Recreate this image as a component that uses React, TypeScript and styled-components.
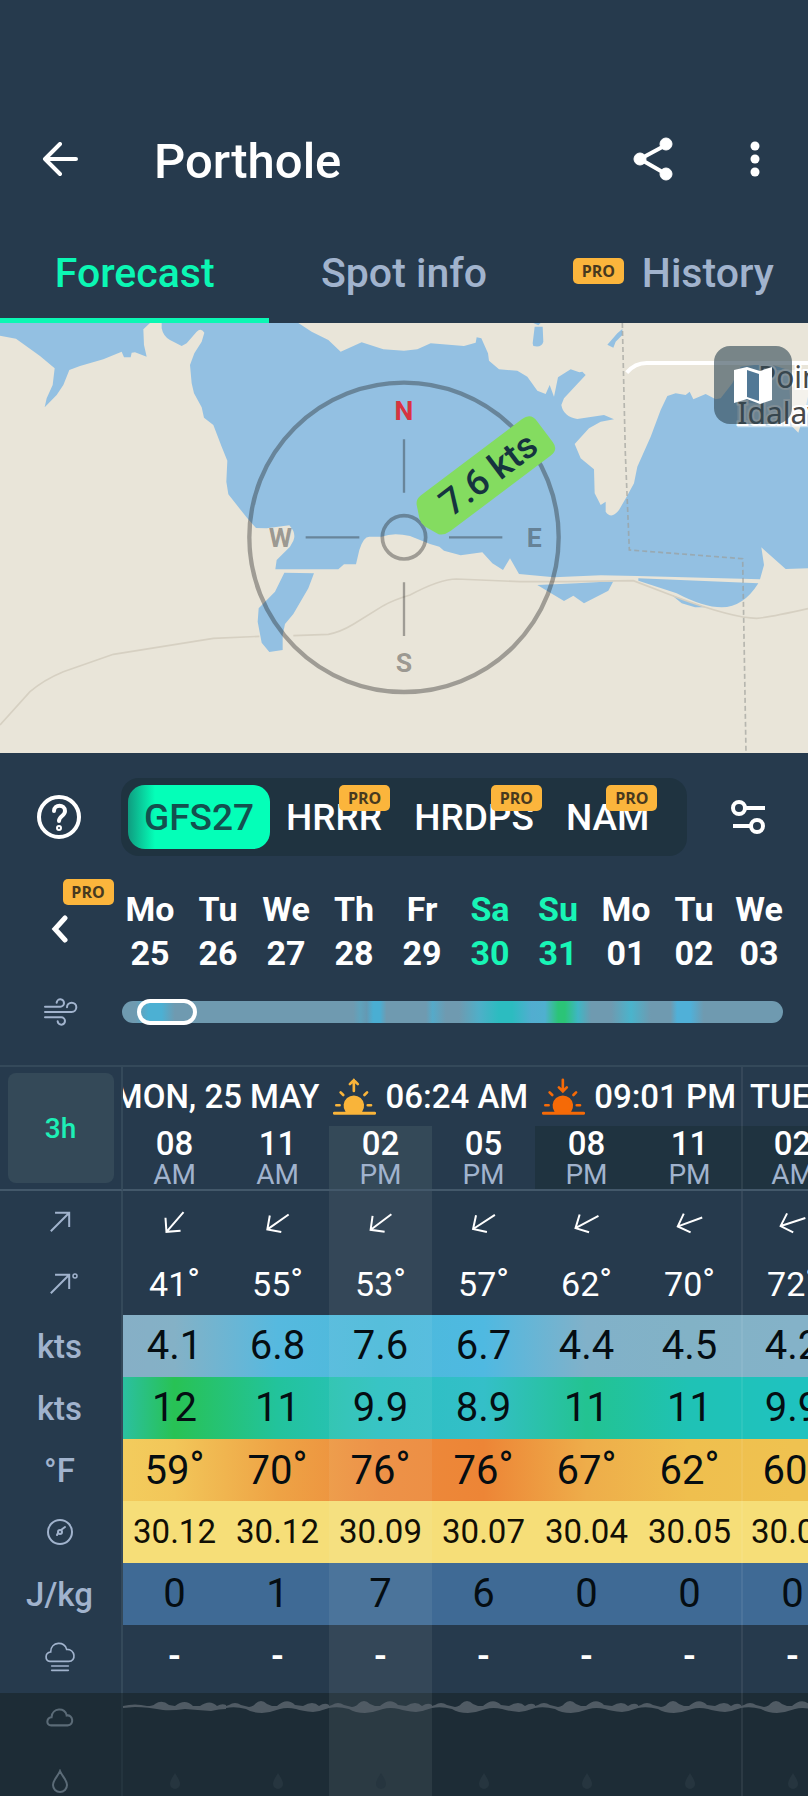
import React, { useState } from "react";
import styled, { createGlobalStyle, css } from "styled-components";

const color = {
  page: "#263a4d",
  accent: "#0bf7b4",
  muted: "#a1b3cd",
  badge: "#fbb53c",
  night: "#1f3340",
  line: "#34495a",
  dark: "#1d2c36",
};

const GlobalStyle = createGlobalStyle`
  *, *::before, *::after { box-sizing: border-box; }
  body { margin: 0; background: ${color.page}; overflow-x: hidden; }
  button, input { font: inherit; color: inherit; }
  button { background: none; border: 0; padding: 0; cursor: pointer; }
  svg { display: block; }
`;

const Page = styled.div`
  font-family: Roboto, "Liberation Sans", sans-serif;
  color: #fff;
  padding-top: 97px;
  overflow: hidden;
`;

/* ---------- header ---------- */

const AppBar = styled.header`
  display: flex;
  align-items: center;
  height: 128px;
  padding: 0 29px 2px 36px;
`;

const IconButton = styled.button`
  display: flex;
  align-items: center;
  justify-content: center;
  width: 48px;
  height: 48px;
`;

const Title = styled.h1`
  flex: 1;
  margin: 0 0 0 70px;
  padding-top: 4px;
  font-size: 49px;
  line-height: 56px;
  font-weight: 500;
`;

const Actions = styled.div`
  display: flex;
  gap: 54px;
`;

const Tabs = styled.nav`
  display: grid;
  grid-template-columns: repeat(3, 1fr);
`;

const Tab = styled.a<{ $active?: boolean }>`
  display: flex;
  align-items: center;
  justify-content: center;
  gap: 18px;
  height: 98px;
  padding-top: 2px;
  border-bottom: 5px solid ${(p) => (p.$active ? color.accent : "transparent")};
  color: ${(p) => (p.$active ? color.accent : color.muted)};
  font-size: 41px;
  font-weight: 500;
  text-decoration: none;
  white-space: nowrap;
`;

const ProBadge = styled.span`
  display: block;
  width: 51px;
  border-radius: 5px;
  background: ${color.badge};
  color: #47391f;
  font: 700 16px/26px "Open Sans", "Noto Sans", sans-serif;
  text-align: center;
`;

const TabBadge = styled(ProBadge)`
  margin-bottom: 4px;
`;

/* ---------- map ---------- */

const MapPane = styled.section`
  position: relative;
  height: 430px;
  background: #e9e5d9;
`;

const MapDrawing = styled.svg`
  width: 100%;
  height: 430px;
`;

const MapButton = styled.button`
  position: absolute;
  top: 23px;
  right: 16px;
  display: flex;
  align-items: center;
  justify-content: center;
  width: 78px;
  height: 78px;
  border-radius: 16px;
  background: rgba(45, 68, 82, 0.6);
`;

/* ---------- model picker ---------- */

const ModelRow = styled.section`
  display: flex;
  align-items: center;
  padding-top: 25px;
`;

const SideSlot = styled.div`
  display: flex;
  flex-direction: column;
  align-items: center;
  flex: none;
  width: 118px;
`;

const FilterSlot = styled(SideSlot)`
  width: 121px;
`;

const ModelPicker = styled.div`
  flex: 1;
  display: flex;
  margin-left: 3px;
  padding: 7px;
  border-radius: 18px;
  background: ${color.night};
`;

const ModelButton = styled.button<{ $active?: boolean }>`
  position: relative;
  height: 64px;
  padding: 0 16px;
  border-radius: 17px;
  font-size: 37px;
  font-weight: 500;
  ${(p) =>
    p.$active &&
    css`
      background: linear-gradient(90deg, #0f9c80 0, #04ffb8 27px);
      color: #14504f;
    `}
`;

const ModelBadge = styled(ProBadge)`
  position: absolute;
  top: 0;
  right: 8px;
`;

/* ---------- day strip ---------- */

const DayRow = styled.section`
  display: flex;
  padding-top: 23px;
`;

const PrevSlot = styled(SideSlot)`
  width: 116px;
  padding-left: 4px;
`;

const PrevBadge = styled(ProBadge)`
  margin-left: 56px;
`;

const Days = styled.div`
  flex: 1;
  display: grid;
  grid-template-columns: repeat(9, 68fr) 62fr;
  padding: 8px 18px 0 0;
`;

const Day = styled.button<{ $weekend?: boolean }>`
  display: flex;
  flex-direction: column;
  align-items: center;
  color: ${(p) => (p.$weekend ? "#18f5b6" : "#fff")};
  font-size: 34px;
  line-height: 44px;
  font-weight: 700;
`;

const RangeRow = styled.section`
  display: flex;
  align-items: center;
  height: 73px;
  margin-bottom: 17px;
`;

const WindSlot = styled(SideSlot)`
  padding-left: 4px;
`;

const RangeBox = styled.div`
  flex: 1;
  display: flex;
  padding: 0 25px 0 4px;
`;

const WindRange = styled.input`
  appearance: none;
  width: 100%;
  height: 28px;
  margin: 0;
  background: none;

  &::-webkit-slider-runnable-track {
    height: 22px;
    border-radius: 11px;
    background: linear-gradient(
      90deg,
      #6f9ab0 0 2%, #4cb0d3 4% 6%, #6f9ab0 8% 35%, #5fa3bd 36%, #6499b3 37%,
      #4aaed3 38% 39%, #6f9ab0 40% 45%, #6f9ab0 46%, #55aac9 47%, #6f9ab0 49% 51%,
      #4fafc8 54%, #2cbcc0 57% 59%, #52add0 62%, #4fb0cf 64%, #2bc477 66% 67%,
      #3fb6c4 69%, #6f9ab0 71% 74%, #4ab4cc 77%, #6f9ab0 80% 83%, #50b0d8 84% 86%,
      #6f9ab0 88%
    );
  }

  &::-webkit-slider-thumb {
    appearance: none;
    width: 60px;
    height: 26px;
    margin-top: -2px;
    border: 4px solid #fff;
    border-radius: 13px;
    background: transparent;
  }
`;

/* ---------- forecast table ---------- */

const Scroller = styled.section`
  overflow: hidden;
  border-top: 2px solid ${color.line};
`;

const Table = styled.table`
  table-layout: fixed;
  width: calc(100% + 36px);
  border-spacing: 0;
  text-align: center;

  th,
  td {
    padding: 0;
  }

  col:first-child {
    width: 123px;
  }
`;

const divider = css`
  box-shadow: inset 2px 0 rgba(255, 255, 255, 0.07);
`;

const StepCell = styled.th`
  border-right: 2px solid ${color.line};
  border-bottom: 2px solid #43586a;
`;

const StepButton = styled.button`
  width: 106px;
  height: 110px;
  border-radius: 8px;
  background: #344958;
  color: #1defb6;
  font-size: 28px;
  font-weight: 500;
`;

const DateCell = styled.th<{ $next?: boolean }>`
  height: 59px;
  font-size: 33px;
  font-weight: 500;
  white-space: nowrap;
  ${(p) => p.$next && divider}
`;

const DateLine = styled.div<{ $next?: boolean }>`
  display: flex;
  align-items: center;
  justify-content: ${(p) => (p.$next ? "flex-start" : "flex-end")};
  gap: 9px;
  padding: 0 5px 0 9px;
  overflow: hidden;
`;

const SunTime = styled.span`
  display: flex;
  align-items: center;
  gap: 9px;
  margin-left: 5px;
`;

const HourCell = styled.th<{ $now?: boolean; $night?: boolean; $next?: boolean }>`
  height: 65px;
  border-bottom: 2px solid #43586a;
  vertical-align: top;
  background: ${(p) => (p.$now ? "#344958" : p.$night ? color.night : "none")};
  ${(p) => p.$next && divider}
`;

const Hour = styled.div`
  font-size: 33px;
  line-height: 36px;
  font-weight: 500;
`;

const Meridiem = styled.div`
  color: ${color.muted};
  font-size: 28px;
  line-height: 26px;
  font-weight: 400;
`;

const Row = styled.tr<{ $fill?: string; $height?: number; $dim?: boolean }>`
  height: ${(p) => p.$height ?? 62}px;
  background: ${(p) => (p.$dim ? color.dark : p.$fill ?? "none")};
`;

const LabelCell = styled.th<{ $dim?: boolean }>`
  background: ${(p) => (p.$dim ? color.dark : color.page)};
  border-right: 2px solid ${(p) => (p.$dim ? "#24343e" : color.line)};
  color: ${(p) => (p.$dim ? "#5b6b77" : color.muted)};
  font-size: 33px;
  font-weight: 500;

  svg {
    margin: 0 auto;
  }
`;

const LabelBox = styled.div`
  padding-right: 2px;
`;

type CellKind = "degree" | "value" | "pressure" | "dash" | "art";

const cellFont: Record<CellKind, string> = {
  degree: "font-size: 34px; color: #fff;",
  value: "font-size: 40px; color: #050d12;",
  pressure: "font-size: 33px; color: #110f05;",
  dash: "font-size: 34px; font-weight: 700; color: #fff;",
  art: "vertical-align: top;",
};

const Cell = styled.td<{ $kind: CellKind; $now?: boolean; $next?: boolean }>`
  ${(p) => cellFont[p.$kind]}
  line-height: 44px;
  background: ${(p) => (p.$now ? "rgba(238, 255, 234, 0.07)" : "none")};
  white-space: nowrap;
  ${(p) => p.$next && divider}

  svg {
    margin: 0 auto;
  }
`;

const Degree = styled.span`
  line-height: 1;
  vertical-align: 4px;
`;

const Dash = styled.div`
  padding-bottom: 8px;
`;

const WaveSvg = styled.svg`
  width: 100%;
  height: 56px;
`;

/* ---------- drawings ---------- */

const WindMap = () => (
  <MapDrawing viewBox="0 9 2424 1290" preserveAspectRatio="xMidYMid slice" role="img" aria-label="Spot map">
    <g fill="#93c0e2">
      <path d="M0 9H450L430 28 432 75 440 110 405 97 395 98 392 112H372L365 95 310 118 240 138 208 150 190 195 170 225 134 262 140 235 158 195 164 145 120 108 48 56 0 47Z" />
      <path d="M485 9V25Q490 50 510 60L545 78 560 70 590 35Q603 22 613 38L605 65 583 100 570 135 575 190 582 220 605 262 612 293 640 315 665 380 682 422 679 485 685 523 742 595 768 624 800 625 868 616Q890 640 880 662L870 680 830 720 826 748H1015L1032 733H1068L1078 690Q1090 650 1108 650H1145Q1180 636 1230 648L1290 672 1318 680 1332 692 1382 706 1447 697 1477 730 1509 750 1530 715 1557 762 1662 772 1802 766 1912 768 2280 778 2292 735 2284 682 2357 747 2424 745V230L2410 290 2395 338 2375 318 2365 150 2300 130 2222 140 2197 190 2162 235 2147 238 2117 222 2080 238 2069 215 2057 225 2027 220 2002 228 1982 270 1952 350 1912 440 1902 490 1880 530 1857 570Q1834 600 1817 575V545L1802 555 1784 520 1782 448 1742 415 1724 372 1767 325 1802 305 1842 298 1812 285 1732 297Q1690 290 1684 255L1692 235 1757 165 1747 155 1738 157 1712 148 1674 172 1662 230 1649 195 1637 222 1612 212 1582 170 1552 152 1497 148 1467 122 1464 100 1444 55 1430 52 1427 68 1392 78 1292 70 1252 88 1212 92 1150 88 1085 67 1022 95 985 60 935 35 895 9Z" />
      <path d="M853 758 942 760 925 805 880 882 855 912 848 945V990L808 996 785 968 773 905 776 865 825 815Z" />
      <path d="M1612 795 1730 790 1840 784 1825 812 1752 850 1720 827 1692 843Z" />
      <path d="M1915 775 2275 790Q2230 862 2165 862 2110 862 2030 820L1915 782Z" />
      <path d="M2015 825 2060 842 2118 862H2085L2045 850Z" />
      <path d="M1600 9H1622L1615 16ZM1604 20H1628L1630 65Q1625 84 1600 78L1598 70Z" />
      <path d="M1822 74 1852 40 1867 27V45L1847 65 1840 83Z" />
    </g>
    <g fill="none" stroke="#d6d0c2" strokeWidth="5">
      <path d="M0 1215 90 1115Q130 1080 190 1055L340 1003 640 955 778 949" />
      <path d="M880 947 985 943Q1020 937 1060 913L1150 857Q1180 840 1230 825 1320 777 1370 777L1560 785 1700 785 1900 782 2030 832Q2200 895 2270 895 2310 892 2424 866" />
    </g>
    <path d="M1867 9 1876 400 1888 690 2228 716 2238 1299" fill="none" stroke="#9b9d98" strokeOpacity=".65" strokeWidth="5" strokeDasharray="15 9" />
    <path d="M1880 158Q1905 129 1940 129H2424" fill="none" stroke="#fff" strokeWidth="12" />
    <path d="M2280 150H2424V270H2280ZM2212 250H2424V322H2212Z" fill="#fff" fillOpacity=".5" />
    <g fontFamily="Noto Sans, sans-serif" fontSize="90" fill="#47494a" stroke="#fff" strokeWidth="12" paintOrder="stroke">
      <text x="2274" y="204">Poin</text>
      <text x="2212" y="312">Idalav</text>
    </g>
    <g fill="none" stroke="#1c1c1c" strokeOpacity=".36">
      <circle cx="1212" cy="652" r="464" strokeWidth="13" />
      <circle cx="1212" cy="652" r="65" strokeWidth="11" />
      <path d="M1212 358V518M1212 787V948M917 652H1078M1347 652H1507" strokeWidth="7" />
    </g>
    <g fontFamily="Roboto, sans-serif" fontSize="80" fontWeight="700" textAnchor="middle" fill="#1c1c1c" fillOpacity=".4">
      <text x="1212" y="301" fill="#d83440" fillOpacity="1">N</text>
      <text x="841" y="682">W</text>
      <text x="1603" y="682">E</text>
      <text x="1212" y="1057">S</text>
    </g>
    <g transform="translate(1460 465) rotate(-37)">
      <path d="M-195-70H186Q218-70 218-38V40Q218 69 189 69H-188Q-210 69-222 55L-241 12Q-245-3-240-16L-222-54Q-214-70-195-70Z" fill="#84dc60" />
      <text x="6" y="38" fontFamily="Roboto, sans-serif" fontSize="110" fontWeight="500" textAnchor="middle" fill="#16333f">7.6 kts</text>
    </g>
  </MapDrawing>
);

const SunIcon = ({ set }: { set?: boolean }) => {
  const tint = set ? "#f56a07" : "#f9b43a";
  return (
    <svg width="43" height="38" viewBox="1002 100 130 114" fill="none" stroke={tint} strokeWidth="8" strokeLinecap="round" aria-label={set ? "Sunset" : "Sunrise"}>
      <path d="M1006 206H1128" strokeWidth="9" />
      <path d="M1043 199a27 27 0 1 1 44 0Z" fill={tint} />
      <path d="M1012 182H1022M1107 182H1117M1025 143 1033 151M1105 143 1097 151" />
      {set ? <path d="M1065 105V138M1053 128 1065 140 1077 128" /> : <path d="M1065 139V106M1053 118 1065 106 1077 118" />}
    </svg>
  );
};

const Arrow = ({ angle, degree }: { angle: number; degree?: boolean }) => (
  <svg width="54" height="32" viewBox="-27 -16 54 32" fill="none" stroke="currentColor" strokeWidth="2">
    <path d="M0 13V-12M-10-3 0-13 10-3" transform={`rotate(${angle})`} />
    {degree && <circle cx="15" cy="-8" r="2" strokeWidth="1.5" />}
  </svg>
);

const WindIcon = () => (
  <svg width="36" height="30" viewBox="132 740 108 90" fill="none" stroke={color.muted} strokeWidth="6" strokeLinecap="round">
    <path d="M138 769H184a11 11 0 1 0-11-12M138 785H218a14 14 0 1 0-14-14M138 801H187a11 11 0 1 1-11 12" />
  </svg>
);

const RainIcon = () => (
  <svg width="32" height="36" viewBox="132 270 96 108" fill="none" stroke={color.muted} strokeWidth="5" strokeLinecap="round">
    <path d="M150 331C134 329 134 305 152 303 152 270 196 270 200 295 226 294 230 331 206 331Z" />
    <path d="M155 345H205M155 358H205" />
  </svg>
);

const CloudIcon = () => (
  <svg width="28" height="28" viewBox="132 268 96 96" fill="none" stroke="currentColor" strokeWidth="7">
    <path d="M150 331C130 331 134 304 151 303 152 270 200 268 203 297 225 293 230 331 206 331Z" />
  </svg>
);

const GaugeIcon = () => (
  <svg width="28" height="28" viewBox="-14 -14 28 28" fill="none" stroke={color.muted} strokeWidth="2">
    <circle r="12" />
    <circle cx="0" cy="0" r="2" />
    <path d="M1-2 5-5M-2 1-3 3" strokeLinecap="round" />
  </svg>
);

const DropIcon = () => (
  <svg width="18" height="24" viewBox="-9 -12 18 24" fill="none" stroke="currentColor" strokeWidth="2">
    <path d="M0-10C2-5 7-1 7 4A7 7 0 0 1-7 4C-7-1-2-5 0-10Z" />
  </svg>
);

const FaintDrop = () => (
  <svg width="12" height="16" viewBox="-6 -8 12 16" fill="#26353f">
    <path d="M0-8C2-4 5-1 5 3A5 5 0 0 1-5 3C-5-1-2-4 0-8Z" />
  </svg>
);

const CloudWave = ({ first }: { first?: boolean }) => (
  <WaveSvg viewBox="0 0 103 56" preserveAspectRatio="none" fill="#505b64">
    {first ? (
      <path d="M0 13Q12 10 24 13 30 13 32 11 39 6 46 12L52 13Q62 5 70 13H77Q87 6 94 13 99 10 103 12V16Q96 16 88 18 74 17 62 16 48 18 40 17 24 14 12 14L0 15Z" />
    ) : (
      <path d="M0 13 3 12Q9 8 15 12L23 14Q28 13 29 11 35 5 41 11L46 13H51Q61 4 69 12L77 13Q87 7 93 13 99 9 103 12V15Q95 18 87 19 76 18 70 16 61 14 54 16 46 19 36 20 26 20 20 16 9 13 0 15Z" />
    )}
  </WaveSvg>
);

/* ---------- data ---------- */

const models = [
  { name: "GFS27", pro: false },
  { name: "HRRR", pro: true },
  { name: "HRDPS", pro: true },
  { name: "NAM", pro: true },
];

const days = ["Mo 25", "Tu 26", "We 27", "Th 28", "Fr 29", "Sa 30", "Su 31", "Mo 01", "Tu 02", "We 03"].map((d) => d.split(" "));

const NOW = 2;
const NEXT_DAY = 6;
const hours = ["08 AM", "11 AM", "02 PM", "05 PM", "08 PM", "11 PM", "02 AM"].map((h) => h.split(" "));
const directions = [41, 55, 53, 57, 62, 70, 72];

const degrees = (values: number[]) => values.map((v) => <>{v}<Degree>°</Degree></>);

// Colour stops sit at the centre of each forecast column.
const blend = (edge: string, stops: string[]) =>
  `linear-gradient(90deg, ${edge} 123px, ${stops
    .map((c, i) => `${c} calc(123px + (100% - 123px) * ${2 * i + 1} / 14)`)
    .join(", ")})`;

const rows: { label: React.ReactNode; name: string; kind: CellKind; fill?: string; values: React.ReactNode[]; height?: number }[] = [
  { label: <Arrow angle={45} degree />, name: "Wind direction in degrees", kind: "degree", values: degrees(directions) },
  {
    label: "kts", name: "Wind speed", kind: "value",
    fill: blend("#86afc6", ["#84b1c6", "#56b9df", "#4bbada", "#4fb9e1", "#81b1c9", "#82b2c6", "#84b2c8"]),
    values: ["4.1", "6.8", "7.6", "6.7", "4.4", "4.5", "4.2"],
  },
  {
    label: "kts", name: "Wind gusts", kind: "value",
    fill: blend("#2bc0a0", ["#28c254", "#22c39c", "#2bc0c2", "#34bfc8", "#23c391", "#1fc2b5", "#1fc2bf"]),
    values: ["12", "11", "9.9", "8.9", "11", "11", "9.9"],
  },
  {
    label: "°F", name: "Temperature", kind: "value",
    fill: blend("#f3cc5d", ["#f2c659", "#eea345", "#ed8a3c", "#ed8536", "#eead4a", "#efbf4e", "#efc250"]),
    values: degrees([59, 70, 76, 76, 67, 62, 60]),
  },
  { label: <GaugeIcon />, name: "Pressure", kind: "pressure", fill: "#f6de78", values: ["30.12", "30.12", "30.09", "30.07", "30.04", "30.05", "30.04"] },
  { label: "J/kg", name: "CAPE", kind: "value", fill: "#3f6a95", values: ["0", "1", "7", "6", "0", "0", "0"] },
  { label: <RainIcon />, name: "Precipitation", kind: "dash", height: 68, values: Array(7).fill(<Dash>-</Dash>) },
];

export default function App() {
  const [model, setModel] = useState("GFS27");
  return (
    <Page>
      <GlobalStyle />
      <AppBar>
        <IconButton aria-label="Back">
          <svg width="36" height="36" viewBox="0 0 36 36" fill="none" stroke="#fff" strokeWidth="4" strokeLinecap="round" strokeLinejoin="round">
            <path d="M34 17H3M18 2 3 17 18 32" />
          </svg>
        </IconButton>
        <Title>Porthole</Title>
        <Actions>
          <IconButton aria-label="Share">
            <svg width="40" height="48" viewBox="0 0 40 48" fill="#fff" stroke="#fff">
              <path d="M33 9 7 23 33 38" fill="none" strokeWidth="4" />
              <circle cx="33" cy="8" r="6" />
              <circle cx="7" cy="23" r="6" />
              <circle cx="33" cy="38" r="6" />
            </svg>
          </IconButton>
          <IconButton aria-label="More options">
            <svg width="12" height="40" viewBox="0 0 12 40" fill="#fff">
              <circle cx="6" cy="6" r="4.5" />
              <circle cx="6" cy="19" r="4.5" />
              <circle cx="6" cy="32" r="4.5" />
            </svg>
          </IconButton>
        </Actions>
      </AppBar>
      <Tabs>
        <Tab href="#forecast" $active>Forecast</Tab>
        <Tab href="#spot">Spot info</Tab>
        <Tab href="#history"><TabBadge>PRO</TabBadge>History</Tab>
      </Tabs>

      <MapPane>
        <WindMap />
        <MapButton aria-label="Open map">
          <svg width="40" height="38" viewBox="0 0 40 38">
            <path d="M1 4 14 1 27 5 39 1V34L27 38 14 33 1 37Z" fill="#fff" />
            <path d="M14 4 26 8V35L14 31Z" fill="#517896" />
          </svg>
        </MapButton>
      </MapPane>

      <ModelRow>
        <SideSlot>
          <IconButton aria-label="Help">
            <svg width="44" height="44" viewBox="-22 -22 44 44" fill="none" stroke="#fff" strokeWidth="4" strokeLinecap="round">
              <circle r="20" />
              <path d="M-5-6C-5-13 6-13 6-6 6-1 0-1 0 4" />
              <circle cx="0" cy="11" r="1" />
            </svg>
          </IconButton>
        </SideSlot>
        <ModelPicker>
          {models.map((m) => (
            <ModelButton key={m.name} $active={m.name === model} onClick={() => setModel(m.name)}>
              {m.name}
              {m.pro && <ModelBadge>PRO</ModelBadge>}
            </ModelButton>
          ))}
        </ModelPicker>
        <FilterSlot>
          <IconButton aria-label="Settings">
            <svg width="36" height="36" viewBox="0 0 36 36" fill="none" stroke="#fff" strokeWidth="4">
              <path d="M15 9H35M3 27H21" />
              <circle cx="9" cy="9" r="6" />
              <circle cx="27" cy="27" r="6" />
            </svg>
          </IconButton>
        </FilterSlot>
      </ModelRow>

      <DayRow>
        <PrevSlot>
          <PrevBadge>PRO</PrevBadge>
          <IconButton aria-label="Previous days">
            <svg width="18" height="28" viewBox="0 0 18 28" fill="none" stroke="#fff" strokeWidth="5" strokeLinecap="round">
              <path d="M14 3 4 14 14 25" />
            </svg>
          </IconButton>
        </PrevSlot>
        <Days>
          {days.map(([day, date]) => (
            <Day key={date} $weekend={day[0] === "S"}>
              <span>{day}</span>
              <span>{date}</span>
            </Day>
          ))}
        </Days>
      </DayRow>
      <RangeRow>
        <WindSlot><WindIcon /></WindSlot>
        <RangeBox>
          <WindRange type="range" min={0} max={40} defaultValue={1} aria-label="Visible forecast period" />
        </RangeBox>
      </RangeRow>

      <Scroller>
        <Table>
          <colgroup>
            <col />
            {hours.map((_, i) => <col key={i} />)}
          </colgroup>
          <thead>
            <tr>
              <StepCell rowSpan={2}><StepButton>3h</StepButton></StepCell>
              <DateCell colSpan={6}>
                <DateLine>
                  <span>MON, 25 MAY</span>
                  <SunTime><SunIcon />06:24 AM</SunTime>
                  <SunTime><SunIcon set />09:01 PM</SunTime>
                </DateLine>
              </DateCell>
              <DateCell $next><DateLine $next>TUE</DateLine></DateCell>
            </tr>
            <tr>
              {hours.map(([h, m], i) => (
                <HourCell key={i} $now={i === NOW} $night={i > 3} $next={i === NEXT_DAY}>
                  <Hour>{h}</Hour>
                  <Meridiem>{m}</Meridiem>
                </HourCell>
              ))}
            </tr>
          </thead>
          <tbody>
            <Row>
              <LabelCell scope="row" aria-label="Wind direction"><LabelBox><Arrow angle={45} /></LabelBox></LabelCell>
              {directions.map((d, i) => (
                <Cell key={i} $kind="degree" $now={i === NOW} $next={i === NEXT_DAY}><Arrow angle={d + 180} /></Cell>
              ))}
            </Row>
            {rows.map((r) => (
              <Row key={r.name} $fill={r.fill} $height={r.height}>
                <LabelCell scope="row" aria-label={r.name}><LabelBox>{r.label}</LabelBox></LabelCell>
                {r.values.map((v, i) => (
                  <Cell key={i} $kind={r.kind} $now={i === NOW} $next={i === NEXT_DAY}>{v}</Cell>
                ))}
              </Row>
            ))}
            <Row $dim $height={56}>
              <LabelCell scope="row" aria-label="Cloud cover" $dim><LabelBox><CloudIcon /></LabelBox></LabelCell>
              {hours.map((_, i) => (
                <Cell key={i} $kind="art" $now={i === NOW} $next={i === NEXT_DAY}><CloudWave first={i === 0} /></Cell>
              ))}
            </Row>
            <Row $dim $height={64}>
              <LabelCell scope="row" aria-label="Humidity" $dim><LabelBox><DropIcon /></LabelBox></LabelCell>
              {hours.map((_, i) => (
                <Cell key={i} $kind="degree" $now={i === NOW} $next={i === NEXT_DAY}><FaintDrop /></Cell>
              ))}
            </Row>
          </tbody>
        </Table>
      </Scroller>
    </Page>
  );
}
